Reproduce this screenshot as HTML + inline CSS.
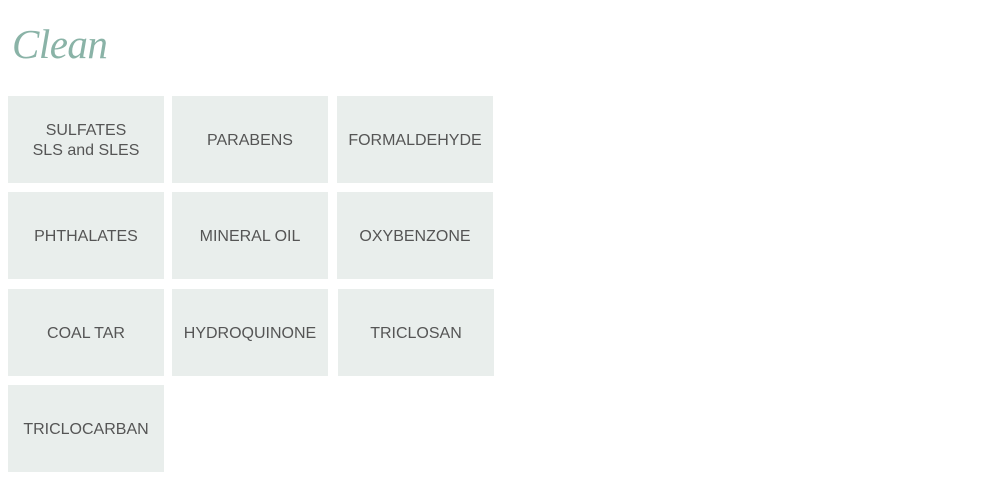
<!DOCTYPE html>
<html><head><style>
body{margin:0;background:#fff;width:1000px;height:482px;position:relative;overflow:hidden}
h1{position:absolute;left:12px;top:20px;margin:0;font:italic 41px "Liberation Serif",serif;color:#8ab3a7;font-weight:normal;letter-spacing:-0.5px}
.b{position:absolute;width:156px;height:87px;box-sizing:border-box;padding-top:3px;background:#e9eeec;display:flex;align-items:center;justify-content:center;text-align:center;font:16px/20px "Liberation Sans",sans-serif;color:#555;letter-spacing:0}
</style></head><body>
<h1>Clean</h1>
<div class="b" style="left:8px;top:96px">SULFATES<br>SLS and SLES</div>
<div class="b" style="left:172px;top:96px">PARABENS</div>
<div class="b" style="left:337px;top:96px">FORMALDEHYDE</div>
<div class="b" style="left:8px;top:192px">PHTHALATES</div>
<div class="b" style="left:172px;top:192px">MINERAL OIL</div>
<div class="b" style="left:337px;top:192px">OXYBENZONE</div>
<div class="b" style="left:8px;top:289px">COAL TAR</div>
<div class="b" style="left:172px;top:289px">HYDROQUINONE</div>
<div class="b" style="left:338px;top:289px">TRICLOSAN</div>
<div class="b" style="left:8px;top:385px">TRICLOCARBAN</div>
</body></html>
